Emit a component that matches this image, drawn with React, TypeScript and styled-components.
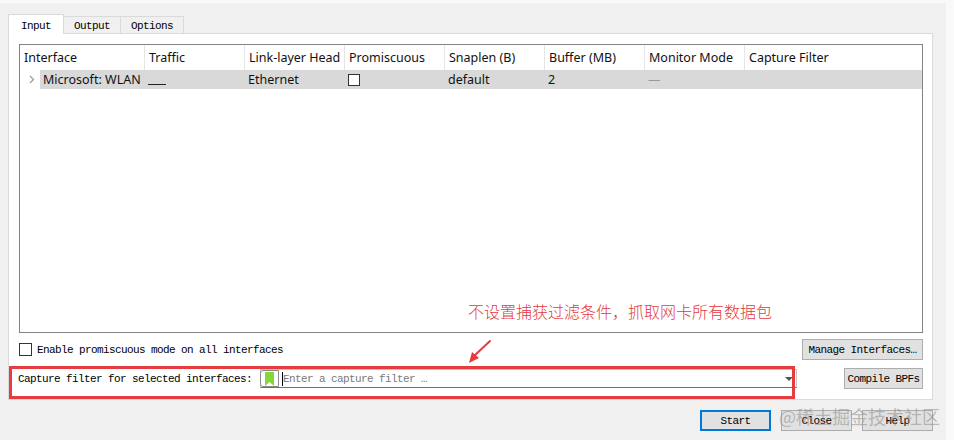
import React from "react";
import styled, { createGlobalStyle } from "styled-components";

const Global = createGlobalStyle`
  html, body { margin: 0; padding: 0; background: #f9f9f9; }
  body { width: 954px; height: 440px; overflow: hidden; }
  *, *::before, *::after { box-sizing: border-box; }
`;

const mono = `"Liberation Mono", "Courier New", monospace`;
const ui = `"Noto Sans", "Noto Sans CJK SC", sans-serif`;
const cjk = `"Noto Sans CJK SC", "Noto Sans", sans-serif`;

const Window = styled.div`
  position: relative;
  width: 946px;
  height: 437px;
  margin-top: 3px;
  background: #f0f0f0;
  padding: 11px 13px 0 8px;
  display: flex;
  flex-direction: column;
`;

const TabBar = styled.div`
  display: flex;
  align-items: flex-end;
  height: 19px;
  position: relative;
  z-index: 1;
`;

const Tab = styled.div<{ $active?: boolean }>`
  font-family: ${mono};
  font-size: 11px;
  letter-spacing: -0.6px;
  color: #000;
  display: flex;
  align-items: center;
  justify-content: center;
  border: 1px solid #dadada;
  border-bottom: none;
  height: ${(p) => (p.$active ? "20px" : "17px")};
  margin-bottom: ${(p) => (p.$active ? "-1px" : "0")};
  padding: ${(p) => (p.$active ? "2px 12px 0 12px" : "1px 10px 0 10px")};
  background: ${(p) => (p.$active ? "#ffffff" : "#f0f0f0")};
  & + & {
    margin-left: -1px;
  }
`;

const Panel = styled.div`
  flex: 0 0 367px;
  border: 1px solid #dadada;
  background: #ffffff;
  padding: 10px 9px 0 10px;
  display: flex;
  flex-direction: column;
`;

const Table = styled.div`
  height: 289px;
  border: 1px solid #838383;
  background: #fff;
  display: flex;
  flex-direction: column;
  font-family: ${ui};
  font-size: 12.5px;
  color: #111;
`;

const HeaderRow = styled.div`
  display: grid;
  grid-template-columns: 125px repeat(6, 100px) 1fr;
  height: 25px;
`;

const HeaderCell = styled.div`
  padding-left: 4px;
  line-height: 25px;
  white-space: nowrap;
  overflow: hidden;
  border-right: 1px solid #e5e5e5;
  &:last-child {
    border-right: none;
  }
`;

const DataRow = styled.div`
  display: flex;
  height: 19px;
`;

const Expander = styled.div`
  width: 20px;
  display: flex;
  align-items: center;
  justify-content: center;
  padding-left: 3px;
`;

const RowBody = styled.div`
  flex: 1;
  display: grid;
  grid-template-columns: 105px repeat(6, 100px) 1fr;
  background: #d9d9d9;
`;

const Cell = styled.div<{ $muted?: boolean }>`
  padding-left: 3px;
  display: flex;
  align-items: center;
  white-space: nowrap;
  overflow: hidden;
  color: ${(p) => (p.$muted ? "#9a9a9a" : "#111")};
`;

const Spark = styled.div`
  width: 18px;
  height: 1px;
  background: #222;
  margin-top: 9px;
`;

const Box = styled.div<{ $size: number }>`
  width: ${(p) => p.$size}px;
  height: ${(p) => p.$size}px;
  border: 1px solid #333;
  background: #fff;
  flex: none;
`;

const OptionsRow = styled.div`
  margin-top: 6px;
  height: 21px;
  display: flex;
  align-items: center;
  justify-content: space-between;
`;

const CheckLabel = styled.label`
  display: flex;
  align-items: center;
  gap: 5px;
  font-family: ${mono};
  font-size: 11px;
  letter-spacing: -0.6px;
  color: #000;
`;

const Button = styled.div<{ $w: number; $default?: boolean }>`
  width: ${(p) => p.$w}px;
  height: 21px;
  display: flex;
  align-items: center;
  justify-content: center;
  background: #e1e1e1;
  border: ${(p) => (p.$default ? "2px solid #0078d7" : "1px solid #adadad")};
  font-family: ${mono};
  font-size: 11px;
  letter-spacing: -0.6px;
  color: #000;
  white-space: nowrap;
`;

const FilterRow = styled.div`
  margin-top: 8px;
  height: 21px;
  display: flex;
  align-items: center;
`;

const FilterLabel = styled.span`
  font-family: ${mono};
  font-size: 11px;
  letter-spacing: -0.6px;
  color: #000;
  margin-left: -1px;
`;

const Combo = styled.div`
  margin-left: 8px;
  width: 537px;
  height: 19px;
  display: flex;
  align-items: center;
  background: #fff;
  border: 1px solid #c4c4c4;
  border-bottom-color: #707070;
`;

const BookmarkSlot = styled.div`
  width: 19px;
  height: 17px;
  border: 1px solid #8a8a8a;
  border-radius: 3px 0 0 3px;
  display: flex;
  align-items: center;
  justify-content: center;
  margin-left: -1px;
`;

const Caret = styled.div`
  width: 1px;
  height: 14px;
  background: #000;
  margin-left: 3px;
`;

const Placeholder = styled.span`
  flex: 1;
  font-family: ${mono};
  font-size: 11px;
  letter-spacing: -0.6px;
  color: #7a7a7a;
  white-space: nowrap;
`;

const DropArrow = styled.div`
  width: 0;
  height: 0;
  border-left: 4px solid transparent;
  border-right: 4px solid transparent;
  border-top: 4px solid #555;
  margin-right: 3px;
`;

const Spacer = styled.div`
  flex: 1;
`;

const ButtonBar = styled.div`
  margin-top: 10px;
  display: flex;
  justify-content: flex-end;
  gap: 10px;
`;

const RedBox = styled.div`
  position: absolute;
  left: 9px;
  top: 363px;
  width: 786px;
  height: 33px;
  border: 3px solid #e53c3f;
  pointer-events: none;
`;

const Note = styled.div`
  position: absolute;
  left: 468px;
  top: 297px;
  font-family: ${cjk};
  font-size: 16px;
  font-weight: 300;
  line-height: 22px;
  color: #e23a3e;
  white-space: nowrap;
`;

const ArrowMark = styled.svg`
  position: absolute;
  left: 464px;
  top: 334px;
`;

const Watermark = styled.div`
  position: absolute;
  left: 779px;
  top: 402px;
  font-family: ${cjk};
  font-size: 18px;
  line-height: 22px;
  color: rgba(140, 140, 140, 0.55);
  white-space: nowrap;
  pointer-events: none;
`;

const headers = [
  "Interface",
  "Traffic",
  "Link-layer Head",
  "Promiscuous",
  "Snaplen (B)",
  "Buffer (MB)",
  "Monitor Mode",
  "Capture Filter",
];

export default function App() {
  return (
    <>
      <Global />
      <Window>
        <TabBar>
          <Tab $active>Input</Tab>
          <Tab>Output</Tab>
          <Tab>Options</Tab>
        </TabBar>
        <Panel>
          <Table>
            <HeaderRow>
              {headers.map((h) => (
                <HeaderCell key={h}>{h}</HeaderCell>
              ))}
            </HeaderRow>
            <DataRow>
              <Expander>
                <svg width="6" height="9" viewBox="0 0 6 9">
                  <path d="M1 1 L4.5 4.5 L1 8" fill="none" stroke="#9a9a9a" strokeWidth="1.2" />
                </svg>
              </Expander>
              <RowBody>
                <Cell>Microsoft: WLAN</Cell>
                <Cell>
                  <Spark />
                </Cell>
                <Cell>Ethernet</Cell>
                <Cell>
                  <Box $size={12} />
                </Cell>
                <Cell>default</Cell>
                <Cell>2</Cell>
                <Cell $muted>—</Cell>
                <Cell />
              </RowBody>
            </DataRow>
            <Spacer />
          </Table>
          <OptionsRow>
            <CheckLabel>
              <Box $size={13} />
              Enable promiscuous mode on all interfaces
            </CheckLabel>
            <Button $w={121}>Manage Interfaces…</Button>
          </OptionsRow>
          <FilterRow>
            <FilterLabel>Capture filter for selected interfaces:</FilterLabel>
            <Combo>
              <BookmarkSlot>
                <svg width="9" height="14" viewBox="0 0 9 14">
                  <path d="M0 0 H9 V14 L4.5 10 L0 14 Z" fill="#84d63a" />
                </svg>
              </BookmarkSlot>
              <Caret />
              <Placeholder>Enter a capture filter …</Placeholder>
              <DropArrow />
            </Combo>
            <Spacer />
            <Button $w={79}>Compile BPFs</Button>
          </FilterRow>
        </Panel>
        <ButtonBar>
          <Button $w={71} $default>
            Start
          </Button>
          <Button $w={71}>Close</Button>
          <Button $w={71}>Help</Button>
        </ButtonBar>
        <RedBox />
        <Note>不设置捕获过滤条件，抓取网卡所有数据包</Note>
        <ArrowMark width="30" height="30" viewBox="0 0 30 30">
          <path d="M26 4 L10 19" stroke="#e53c3f" strokeWidth="2" strokeLinecap="round" />
          <path d="M5 26 L8 15 L15 21 Z" fill="#e53c3f" />
        </ArrowMark>
        <Watermark>@稀土掘金技术社区</Watermark>
      </Window>
    </>
  );
}
